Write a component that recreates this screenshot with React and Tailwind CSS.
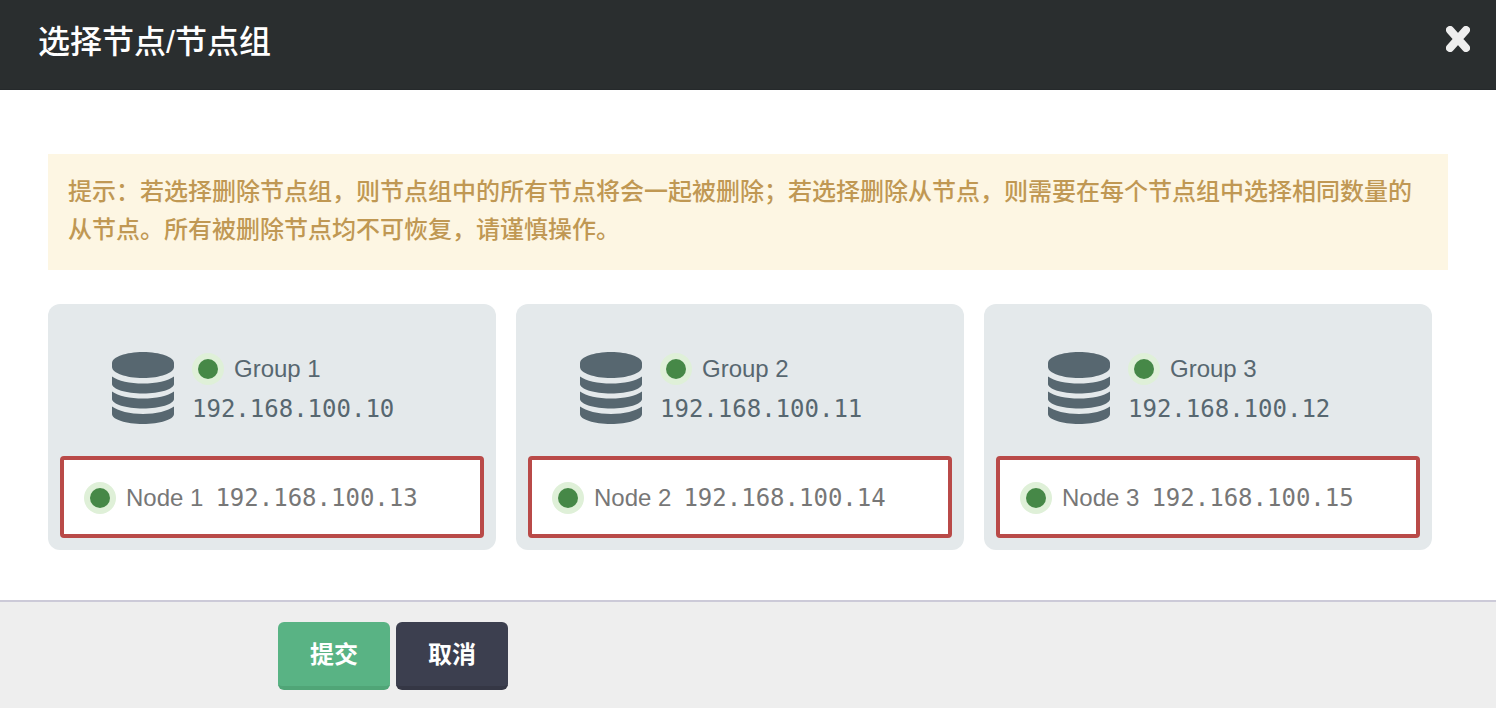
import React, { useState } from 'react';

const groups = [
  { id: 1, name: 'Group 1', ip: '192.168.100.10', node: { name: 'Node 1', ip: '192.168.100.13' } },
  { id: 2, name: 'Group 2', ip: '192.168.100.11', node: { name: 'Node 2', ip: '192.168.100.14' } },
  { id: 3, name: 'Group 3', ip: '192.168.100.12', node: { name: 'Node 3', ip: '192.168.100.15' } },
];

const DatabaseIcon = () => (
  <svg viewBox="0 0 62 72" className="w-[62px] h-[72px] shrink-0" fill="currentColor" aria-hidden="true">
    <path d="M0 11C0 5 14 0 31 0s31 5 31 11v4c0 6-14 11-31 11S0 21 0 15z" />
    <path d="M0 24.500c6 4.500 18 7 31 7s25-2.500 31-7V32c0 5-14 9.500-31 9.500S0 37 0 32z" />
    <path d="M0 39.500c6 4.500 18 7 31 7s25-2.500 31-7V47c0 5-14 9.500-31 9.500S0 52 0 47z" />
    <path d="M0 54.500c6 4.500 18 7.500 31 7.500s25-3 31-7.500V62c0 5.500-14 10-31 10S0 67.500 0 62z" />
  </svg>
);

const CloseIcon = () => (
  <svg viewBox="0 0 24 26" className="w-6 h-[26px]" fill="none" stroke="currentColor" strokeWidth="8" strokeLinecap="round" aria-hidden="true">
    <path d="M4 4l16 18M20 4l-16 18" />
  </svg>
);

const StatusDot = () => (
  <span className="flex items-center justify-center size-8 shrink-0 rounded-full bg-[#dff0d8]">
    <span className="size-5 rounded-full bg-[#468847]" />
  </span>
);

const Ip = ({ children }) => (
  <span className="font-['DejaVu_Sans_Mono',monospace]">{children}</span>
);

const App = () => {
  const [selected, setSelected] = useState([1, 2, 3]);

  const toggleNode = (id) => {
    setSelected(selected.includes(id) ? selected.filter(item => item !== id) : [...selected, id]);
  };

  return (
    <div className="min-h-screen flex flex-col bg-white font-['Liberation_Sans','Noto_Sans_CJK_SC',sans-serif] text-2xl">
      <header className="flex items-start justify-between pt-[18px] pb-[23px] pl-[38px] pr-[26px] bg-[#2a2e2f] border-b border-[#25292b]">
        <h1 className="text-[32px] leading-[48px] font-medium text-white">选择节点/节点组</h1>
        <button type="button" aria-label="关闭" className="mt-2 text-[#eeeeee] cursor-pointer">
          <CloseIcon />
        </button>
      </header>

      <main className="px-12 pt-16 pb-[50px]">
        <p className="px-5 pt-[19px] pb-[21px] leading-[38px] font-medium bg-[#fdf6e3] text-[#c09853]">
          提示：若选择删除节点组，则节点组中的所有节点将会一起被删除；若选择删除从节点，则需要在每个节点组中选择相同数量的从节点。所有被删除节点均不可恢复，请谨慎操作。
        </p>

        <div className="grid grid-cols-3 gap-5 mt-[34px] mr-4">
          {groups.map(group => (
            <section key={group.id} className="p-3 rounded-xl bg-[#e4e9eb]">
              <div className="flex items-center gap-[18px] h-[140px] pt-1 pl-[52px] text-[#576770]">
                <DatabaseIcon />
                <div className="pt-[2px] leading-10">
                  <div className="flex items-center gap-[10px]">
                    <StatusDot />
                    <h2>{group.name}</h2>
                  </div>
                  <Ip>{group.ip}</Ip>
                </div>
              </div>
              <button
                type="button"
                aria-pressed={selected.includes(group.id)}
                onClick={() => toggleNode(group.id)}
                className={`flex items-center w-full h-[82px] px-5 pt-[2px] border-4 rounded bg-white text-[#777777] cursor-pointer ${
                  selected.includes(group.id) ? 'border-[#b94a48]' : 'border-white'
                }`}
              >
                <StatusDot />
                <span className="ml-[10px] mr-3">{group.node.name}</span>
                <Ip>{group.node.ip}</Ip>
              </button>
            </section>
          ))}
        </div>
      </main>

      <footer className="grow flex items-start gap-[6px] pt-5 pb-[18px] pl-[278px] border-t-2 border-[#cccad8] bg-[#eeeeee] text-white font-bold">
        <button type="submit" className="h-[68px] px-8 pt-[2px] rounded-md border-b-4 border-[#50a577] bg-[#59b384] cursor-pointer">
          提交
        </button>
        <button type="button" className="h-[68px] px-8 pt-[2px] rounded-md border-b-4 border-[#353745] bg-[#3c3f4f] cursor-pointer">
          取消
        </button>
      </footer>
    </div>
  );
};

export default App;
